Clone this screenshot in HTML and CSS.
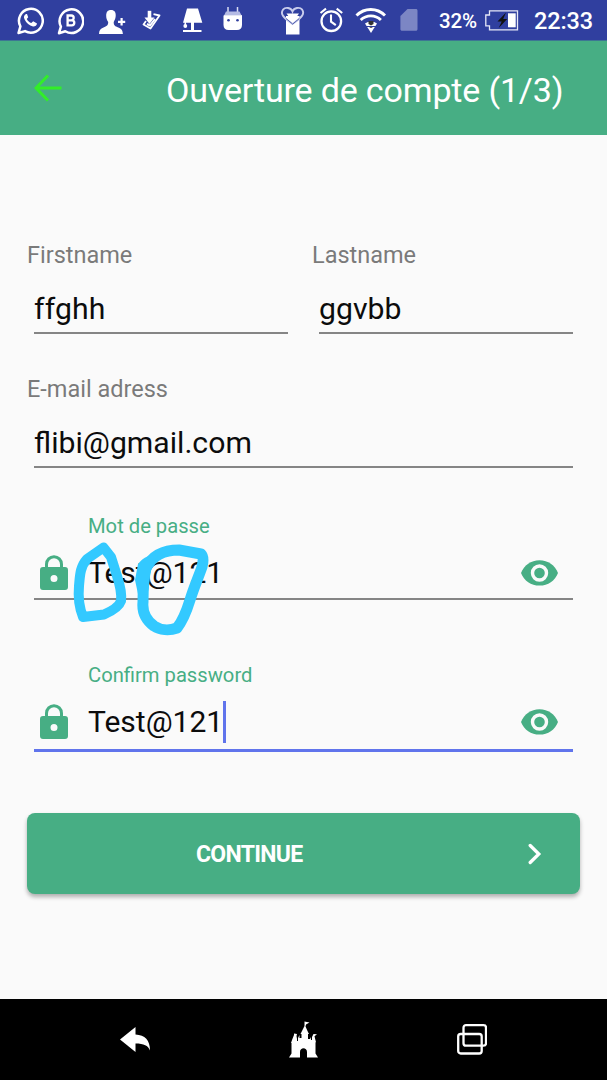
FILE: index.html
```
<!DOCTYPE html>
<html lang="fr">
<head>
<meta charset="utf-8">
<title>Ouverture de compte</title>
<link rel="stylesheet" href="styles.css">
</head>
<body>
<div class="screen">
  <div class="status">
    <div class="notifications">
      <svg width="28" height="40" viewBox="16 0 28 40"><path d="M18.5 33l1.9-6.6A11.9 11.9 0 1 1 25 31.1z" fill="none" stroke="#fff" stroke-width="2.5" stroke-linejoin="round"/><path d="M26 14c-2 1-2.600 3-1.500 5.200 2 4 4.800 6.300 8.500 7.300 2 .2 3.800-1 4-3l-3.800-2.200-1.900 1.800c-2-.8-3.500-2.200-4.500-4.200l1.400-1.600L27 14z" fill="#fff"/></svg>
      <svg width="28" height="40" viewBox="56 0 28 40"><path d="M59 33.200l1.900-6.600A11.800 11.800 0 1 1 65.300 31.300z" fill="none" stroke="#fff" stroke-width="2.500" stroke-linejoin="round"/><path d="M67.600 15.500h3.700a2.300 2.300 0 0 1 0 4.800h-3.700zm0 4.800h4.200a2.400 2.400 0 0 1 0 5h-4.200z" fill="none" stroke="#fff" stroke-width="2.300"/></svg>
      <svg class="person" width="28" height="40" viewBox="98 0 28 40" fill="#fff"><path d="M111 10c3.500 0 5 2.300 4.700 6-.2 3-1.200 4.500-2 6 0 3.500 1.300 4.300 4.600 5.400 3 1 4.400 2.700 4.600 6.600H99c.1-3.800 1.500-5.600 4.500-6.600 3.200-1.100 4.700-2 4.700-5.400-1.200-1.700-2-3.300-2-6 0-4 1.400-6 4.800-6z"/><path d="M120.500 18h2.200v2.700h2.500v2.200h-2.500v2.700h-2.200v-2.700h-2.500v-2.200h2.500z"/></svg>
      <svg class="tool" width="22" height="40" viewBox="140 0 22 40" fill="none" stroke="#fff"><path d="M153.500 14.200l6 1.300-9 13-7-4 2.500-3.500" stroke-width="1.800" stroke-linejoin="round"/><path d="M149.500 10.800v9" stroke-width="3.600"/><path d="M144.500 17.500h10l-5 6.500z" fill="#fff" stroke="none"/><path d="M155 19l-5 6.500-3-1.500" stroke-width="2"/></svg>
      <svg class="lamp" width="23" height="40" viewBox="181 0 23 40" fill="#fff"><path d="M187 8.500h11l4.300 14.300h-19.300zM191 22.800h3v7.300h7.500v2H183v-2h8z"/><path d="M185.300 22v5" stroke="#fff" stroke-width="1.500"/><circle cx="185.300" cy="26" r="1.900"/></svg>
      <svg class="droid" width="22" height="40" viewBox="222 0 22 40"><path d="M228 7v6M237.500 7v6" stroke="#d8dcf4" stroke-width="1.500"/><path d="M223.500 15.500V25c0 3.300 2 5 5 5h8.500c3 0 5-1.700 5-5v-9.500z" fill="#fff"/><path d="M226 11.500h13.500l1.800 3.500h-17z" fill="#b5bbe4"/><path d="M224 16h18" stroke="#fff" stroke-width="1.500"/><circle cx="228.500" cy="20.300" r="1.300" fill="#303f9f"/><circle cx="237.500" cy="20.300" r="1.300" fill="#303f9f"/></svg>
    </div>
    <div class="system">
      <svg width="25" height="40" viewBox="280 0 25 40"><path d="M286 16h13.500v18.500H286z" fill="#fff"/><path d="M292.500 11.500c-1.500-4-7-4.800-9.500-1.800-3 4 0 7.800 9.500 14.300 9.500-6.500 12.500-10.300 9.700-14.300-2.500-3-8.200-2.200-9.700 1.800z" fill="none" stroke="#c9cdec" stroke-width="1.900"/><path d="M286.500 13.500h12.500l-6.200 9z" fill="#fff"/><path d="M286 18.500l6.700 5.600 6.600-5.600" fill="none" stroke="#5360ae" stroke-width="1"/></svg>
      <svg class="alarm" width="25" height="40" viewBox="319 0 25 40" fill="none" stroke="#fff"><circle cx="331.300" cy="21.200" r="9.800" stroke-width="2.300"/><path d="M331 14.500v7.200l4.800 3.400M320.500 13l5.500-4.300M336.700 8.700l5.500 4.300" stroke-width="2.100"/></svg>
      <svg class="wifi" width="33" height="40" viewBox="354 0 33 40" fill="none" stroke="#fff"><path d="M356.500 15.500c8-8 20.500-8 28.500 0M360.700 20c5.800-5.500 14.500-5.500 20.200 0" stroke-width="2.900"/><path d="M365 23.500c3.700-2.700 8.500-2.700 12 0L371 33z" fill="#fff" stroke="none"/><path d="M365 26.500l12 0" stroke="#303f9f" stroke-width="1"/><path d="M368.500 21h5v3l-2.500 1.500-2.500-1.500zM369 28h4l-2-1z" fill="#333" stroke="none"/></svg>
      <svg class="sim" width="19" height="40" viewBox="399 0 19 40"><path d="M407.500 9h8.300c1.200 0 1.700.6 1.700 1.700V29c0 1.200-.6 1.800-1.700 1.800h-13.600c-1.200 0-1.800-.6-1.800-1.800V16z" fill="#7c86c4"/></svg>
      <span class="percent">32%</span>
      <svg class="battery" width="34" height="40" viewBox="485 0 34 40"><path d="M489.500 10.800h28v19h-28v-4h-3.700V15h3.700z" fill="none" stroke="#e6e8f7" stroke-width="1.300"/><path d="M508 13.300h7.700v14H508z" fill="#fff"/><path d="M506 12.500l-8.500 9h4.200l-3 6.500 8.500-9h-4z" fill="#111"/></svg>
      <span class="clock">22:33</span>
    </div>
  </div>
  <header class="appbar">
    <svg class="back" width="28" height="28" viewBox="0 0 28 28"><path d="M27.500 14H2.500M14 1.500L2 14l12 12.500" fill="none" stroke="#32ee28" stroke-width="3"/></svg>
    <h1 class="title">Ouverture de compte (1/3)</h1>
  </header>
  <main class="form">
    <div class="names">
      <div class="field"><div class="label">Firstname</div><div class="value liga-off">ffghh</div></div>
      <div class="field"><div class="label lastname">Lastname</div><div class="value">ggvbb</div></div>
    </div>
    <div class="field email"><div class="label">E-mail adress</div><div class="value mail">flibi@gmail.com</div></div>
    <div class="password">
      <div class="float passe">Mot de passe</div>
      <div class="entry">
        <svg class="lock" width="28" height="36" viewBox="0 0 28 36"><path d="M6.500 14V9.200a7.500 7.500 0 0 1 15 0V14" fill="none" stroke="#47ae84" stroke-width="3"/><path fill-rule="evenodd" d="M3 12h22a3 3 0 0 1 3 3v17a3 3 0 0 1-3 3H3a3 3 0 0 1-3-3V15a3 3 0 0 1 3-3zm11 8a3.500 3.500 0 1 0 0 7 3.500 3.500 0 0 0 0-7z" fill="#47ae84"/></svg>
        <span class="secret">Test@121</span>
        <svg class="eye" width="37" height="26" viewBox="0 0 37 26"><path d="M0 13C3 5 10 .2 18.500.2S34 5 37 13c-3 8-10 12.600-18.500 12.600S3 21 0 13z" fill="#47ae84"/><circle cx="18.500" cy="13" r="7" fill="#47ae84" stroke="#fafafa" stroke-width="3.400"/></svg>
      </div>
      <svg class="marks" width="140" height="100" viewBox="70 540 140 100"><path d="M103.500 547.500L111 557l6 19c3 9 5 17 4 25-2 6-9 10-17 13.500L83 617c-4-10-5-20-4-31s1-19 8-27z" fill="none" stroke="#33c9ff" stroke-width="10" stroke-linejoin="round"/><path d="M146 568c8-16 23-18 33-18l22 4c3 3 2 9 1 13-5 14-8 20-12 33s-9 23-13 28c-8 3-17 2-23-2-8-6-12-14-11-24 0-12 0-22 3-34z" fill="none" stroke="#33c9ff" stroke-width="11" stroke-linejoin="round"/><path d="M138 564c5-7 12-10 20-8-5 5-7 12-8 18-1 8-1 15-3 21l-9-1-3-14z" fill="#33c9ff"/></svg>
    </div>
    <div class="password active">
      <div class="float confirm">Confirm password</div>
      <div class="entry">
        <svg class="lock" width="28" height="36" viewBox="0 0 28 36"><path d="M6.500 14V9.200a7.500 7.500 0 0 1 15 0V14" fill="none" stroke="#47ae84" stroke-width="3"/><path fill-rule="evenodd" d="M3 12h22a3 3 0 0 1 3 3v17a3 3 0 0 1-3 3H3a3 3 0 0 1-3-3V15a3 3 0 0 1 3-3zm11 8a3.500 3.500 0 1 0 0 7 3.500 3.500 0 0 0 0-7z" fill="#47ae84"/></svg>
        <span class="secret">Test@121</span><i class="caret"></i>
        <svg class="eye" width="37" height="26" viewBox="0 0 37 26"><path d="M0 13C3 5 10 .2 18.500.2S34 5 37 13c-3 8-10 12.600-18.500 12.600S3 21 0 13z" fill="#47ae84"/><circle cx="18.500" cy="13" r="7" fill="#47ae84" stroke="#fafafa" stroke-width="3.400"/></svg>
      </div>
    </div>
    <div class="button"><span class="continue">CONTINUE</span><svg width="14" height="22" viewBox="0 0 14 22"><path d="M2.200 2.500l8.600 8.500-8.600 8.500" fill="none" stroke="#fff" stroke-width="3.300" stroke-linecap="round"/></svg></div>
  </main>
  <nav class="navbar">
    <svg width="31" height="26" viewBox="0 0 31 26"><path d="M0 12.500L15.500 0v7.500C25 8 30 13 30 23.500c-2-5-6-7-14.500-7V25z" fill="#fff"/></svg>
    <svg class="castle" width="29" height="37" viewBox="0 0 29 37"><path d="M0 36.500l2.500-4V22H2l1.200-3.500L5 14v-1.500l3 .5-.5 2L8 18v2h1v-3l1.500-3v3h2V13h-1l1.500-3 2.500-5V.5l5 1-3.500 2-.5 2 2 4.500 1.500 3h-1v5h2l1-2v3h1v-3l1.500-3V13l3.500.2-2.500 2 1.500 6h-.5v11.300l2.500 4H18v-5.500c0-5-7-5-7 0v5.500z" fill="#fff"/></svg>
    <svg class="recents" width="30" height="31" viewBox="0 0 30 31"><rect x="6.500" y="1.200" width="22.500" height="20.500" rx="2.500" fill="none" stroke="#fff" stroke-width="2.300"/><rect x="1.200" y="10" width="23.500" height="19.500" rx="2.500" fill="none" stroke="#fff" stroke-width="2.300"/></svg>
  </nav>
</div>
</body>
</html>
```
FILE: styles.css
```
* { box-sizing: border-box; }
body { margin: 0; font-family: Roboto, "Noto Sans", sans-serif; background: #fafafa; }
svg { display: block; flex: none; }
.screen { width: 607px; height: 1080px; display: flex; flex-direction: column; overflow: hidden; }
.status { height: 41px; background: #303f9f; border-bottom: 1px solid #3d7693; display: flex; padding-left: 16px; color: #fff; }
.notifications { display: flex; width: 264px; }
.notifications svg + svg { margin-left: 12px; }
.notifications .person, .notifications .tool { margin-left: 14px; }
.notifications .lamp { margin-left: 19px; }
.notifications .droid { margin-left: 18px; }
.system { display: flex; }
.alarm { margin-left: 14px; }
.wifi { margin-left: 10px; }
.sim { margin-left: 12px; }
.percent { margin-left: 21px; width: 46px; font-size: 20.500px; font-weight: 500; line-height: 42px; letter-spacing: -.1px; }
.clock { margin-left: 15px; font-size: 23.500px; font-weight: 500; line-height: 43px; letter-spacing: -.1px; white-space: nowrap; }
.appbar { height: 94px; background: #47ae84; display: flex; align-items: center; }
.back { margin-left: 34px; }
.title { margin: 3px 0 0 104px; color: #fff; font-size: 34px; font-weight: 400; letter-spacing: -.16px; white-space: nowrap; }
.form { flex: 1; padding: 105px 27px 0; }
.names { display: grid; grid-template-columns: 261px 261px; column-gap: 24px; }
.field { height: 94px; }
.email { margin-top: 40px; width: 546px; }
.label { height: 30px; line-height: 31px; color: #7a7a7a; font-size: 23.500px; }
.value { margin: 18px 0 0 7px; height: 46px; line-height: 42px; font-size: 30.200px; color: #0c0c0c; border-bottom: 2px solid #858585; }
.liga-off { font-variant-ligatures: none; letter-spacing: .15px; }
.password { position: relative; margin: 45px 7px 0; width: 539px; height: 87px; }
.float { height: 26px; line-height: 26px; padding-left: 54px; color: #47ae84; font-size: 20.200px; }
.entry { height: 61px; display: flex; align-items: center; border-bottom: 2px solid #858585; padding: 8px 15px 0 6px; }
.secret { margin-left: 20px; font-size: 30px; line-height: 36px; color: #0c0c0c; }
.eye { margin-left: auto; }
.marks { position: absolute; left: 36px; top: 27px; }
.active { margin-top: 62px; height: 90px; }
.active .entry { height: 64px; border-bottom: 3px solid #6074ec; }
.active .entry { padding-top: 6px; }
.caret { width: 3px; height: 42px; background: #6074ec; }
.button { margin-top: 61px; width: 553px; height: 81px; border-radius: 8px; background: #47ae84; box-shadow: 0 3px 4px rgba(0,0,0,.3); display: flex; align-items: center; justify-content: space-between; padding: 0 38px 0 169px; color: #fff; }
.continue { font-size: 23px; line-height: 28px; padding-top: 2px; font-weight: 700; letter-spacing: -.7px; }
.navbar { height: 81px; background: #000; display: flex; align-items: center; padding-left: 120px; }
.castle { margin-left: 138px; }
.recents { margin-left: 139px; }
```
